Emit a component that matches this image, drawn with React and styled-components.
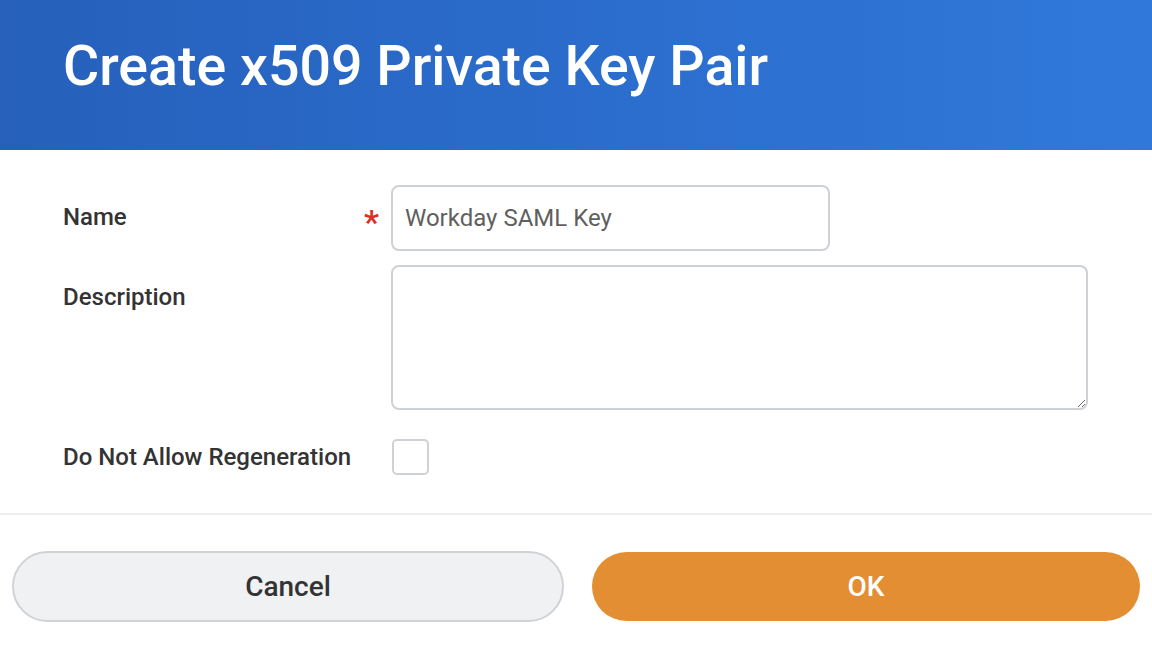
import React, { useState } from "react";
import styled, { createGlobalStyle } from "styled-components";

const Global = createGlobalStyle`
  html, body {
    margin: 0;
    padding: 0;
    background: #ffffff;
    font-family: Roboto, "Noto Sans", "Liberation Sans", sans-serif;
  }
  * { box-sizing: border-box; }
`;

function App() {
  const [name, setName] = useState("Workday SAML Key");
  const [desc, setDesc] = useState("");
  const [noRegen, setNoRegen] = useState(false);

  return (
    <Wrapper>
      <Global />
      <Header>
        <Title>Create x509 Private Key Pair</Title>
      </Header>
      <Form>
        <Row>
          <Label>Name</Label>
          <Required>*</Required>
          <TextInput value={name} onChange={(e) => setName(e.target.value)} />
        </Row>
        <Row>
          <Label>Description</Label>
          <Required />
          <TextArea value={desc} onChange={(e) => setDesc(e.target.value)} />
        </Row>
        <Row $check>
          <Label $check>Do Not Allow Regeneration</Label>
          <Required />
          <Check
            type="checkbox"
            checked={noRegen}
            onChange={(e) => setNoRegen(e.target.checked)}
          />
        </Row>
      </Form>
      <Footer>
        <Button>Cancel</Button>
        <Button $primary>OK</Button>
      </Footer>
    </Wrapper>
  );
}

export default App;

const Wrapper = styled.div`
  width: 1152px;
  height: 648px;
  display: flex;
  flex-direction: column;
  background: #ffffff;
  overflow: hidden;
`;

const Header = styled.div`
  flex-shrink: 0;
  height: 150px;
  background: linear-gradient(90deg, #2660bb 0%, #2c6fcf 60%, #3079db 100%);
  padding: 0 63px;
  display: flex;
  align-items: center;
`;

const Title = styled.h1`
  margin: 0 0 18px;
  color: #ffffff;
  font-size: 55.5px;
  font-weight: 500;
  letter-spacing: 0;
`;

const Form = styled.div`
  flex-shrink: 0;
  display: flex;
  flex-direction: column;
  gap: 14px;
  padding: 35px 0 38px 63px;
  border-bottom: 2px solid #eeeeee;
`;

const Row = styled.div`
  display: flex;
  align-items: ${(p) => (p.$check ? "center" : "flex-start")};
  padding-top: ${(p) => (p.$check ? "15px" : "0")};
`;

const Label = styled.div`
  width: 298px;
  font-size: 24px;
  font-weight: 500;
  color: #333333;
  line-height: ${(p) => (p.$check ? "36px" : "65px")};
  white-space: nowrap;
`;

const Required = styled.span`
  width: 30px;
  color: #de2e21;
  font-size: 34px;
  font-weight: 500;
  line-height: 74px;
  height: 36px;
  padding-left: 3px;
`;

const TextInput = styled.input`
  width: 439px;
  height: 66px;
  border: 2px solid #ced1d5;
  border-radius: 8px;
  padding: 0 12px;
  font-family: Roboto, "Noto Sans", sans-serif;
  font-size: 24px;
  color: #5f5f5f;
  outline: none;
`;

const TextArea = styled.textarea`
  width: 697px;
  height: 145px;
  border: 2px solid #ced1d5;
  border-radius: 8px;
  padding: 12px;
  font-family: Roboto, "Noto Sans", sans-serif;
  font-size: 24px;
  color: #333333;
  outline: none;
  resize: both;
`;

const Check = styled.input`
  appearance: none;
  width: 37px;
  height: 36px;
  margin: 0 0 0 1px;
  border: 2px solid #ced1d5;
  border-radius: 5px;
  background: #ffffff;
  cursor: pointer;
  &:checked {
    background: #2c6fcf;
    border-color: #2c6fcf;
  }
`;

const Footer = styled.div`
  flex-shrink: 0;
  display: flex;
  gap: 28px;
  padding: 36px 12px 0 12px;
`;

const Button = styled.button`
  flex: 1;
  border-radius: 36px;
  border: ${(p) => (p.$primary ? "none" : "2px solid #cfd2d6")};
  background: ${(p) => (p.$primary ? "#e48e33" : "#f0f1f2")};
  color: ${(p) => (p.$primary ? "#ffffff" : "#333333")};
  font-family: Roboto, "Noto Sans", sans-serif;
  font-size: 28px;
  font-weight: 500;
  cursor: pointer;
  margin-top: ${(p) => (p.$primary ? "1px" : "0")};
  height: ${(p) => (p.$primary ? "69px" : "71px")};
`;
